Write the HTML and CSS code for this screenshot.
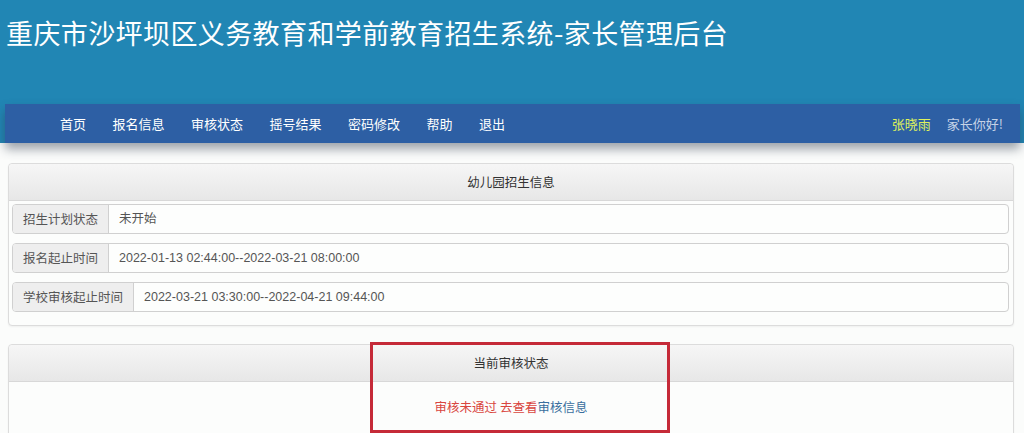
FILE: index.html
```html
<!DOCTYPE html>
<html lang="zh-CN">
<head>
<meta charset="utf-8">
<title>家长管理后台</title>
<link rel="stylesheet" href="styles.css">
</head>
<body>
<header class="top">
  <h1 class="title">重庆市沙坪坝区义务教育和学前教育招生系统-家长管理后台</h1>
  <nav class="nav">
    <ul class="menu">
      <li>首页</li>
      <li>报名信息</li>
      <li>审核状态</li>
      <li>摇号结果</li>
      <li>密码修改</li>
      <li>帮助</li>
      <li>退出</li>
    </ul>
    <div class="user">
      <span class="uname">张晓雨</span>
      <span class="hello">家长你好!</span>
    </div>
  </nav>
</header>
<main class="main">
  <section class="panel">
    <div class="panel-head">幼儿园招生信息</div>
    <div class="panel-body rows">
      <div class="row"><div class="label">招生计划状态</div><div class="value">未开始</div></div>
      <div class="row"><div class="label">报名起止时间</div><div class="value">2022-01-13 02:44:00--2022-03-21 08:00:00</div></div>
      <div class="row"><div class="label">学校审核起止时间</div><div class="value">2022-03-21 03:30:00--2022-04-21 09:44:00</div></div>
    </div>
  </section>
  <section class="panel panel-status">
    <div class="panel-head">当前审核状态</div>
    <div class="panel-body status">
      <span class="red">审核未通过 去查看</span><span class="blue">审核信息</span>
    </div>
    <div class="mark"></div>
  </section>
</main>
</body>
</html>
```
FILE: styles.css
```css
html, body {
  margin: 0;
  padding: 0;
  background: #fbfcfb;
  font-family: "Liberation Sans", "Noto Sans CJK SC", sans-serif;
  overflow: hidden;
}

.top {
  background: #2186b4;
  height: 143px;
  display: flex;
  flex-direction: column;
  justify-content: space-between;
}

.title {
  margin: 0;
  padding: 13px 0 0 6px;
  font-family: "Noto Sans CJK SC", sans-serif;
  font-weight: 400;
  font-size: 27px;
  line-height: 40px;
  color: #ffffff;
  letter-spacing: 0.4px;
}

.nav {
  height: 39px;
  margin: 0 4px 0 5px;
  background: #2d5fa4;
  display: flex;
  align-items: center;
  justify-content: space-between;
  box-shadow: 0 6px 10px rgba(40, 50, 70, 0.45);
  position: relative;
}

.menu {
  list-style: none;
  margin: 0;
  padding: 0 0 0 55px;
  display: flex;
  gap: 26.5px;
}

.menu li,
.user span {
  font-family: "Noto Sans CJK SC", sans-serif;
  font-size: 13px;
  color: #ffffff;
  line-height: 20px;
}

.user {
  display: flex;
  gap: 16px;
  padding-right: 17px;
}

.user .uname {
  color: #dff25c;
}

.user .hello {
  color: #c5d2e6;
}

.main {
  padding: 20px 10px 0 8px;
}

.panel {
  border: 1px solid #dcdcdc;
  border-radius: 4px;
  background: #fcfdfc;
  box-shadow: 0 1px 2px rgba(0, 0, 0, 0.05);
}

.panel + .panel {
  margin-top: 18px;
}

.panel-head {
  height: 36px;
  line-height: 36px;
  text-align: center;
  font-family: "Noto Sans CJK SC", sans-serif;
  font-size: 12.5px;
  color: #333333;
  background: linear-gradient(#f6f6f6, #e7e7e7);
  border-bottom: 1px solid #d8d8d8;
  border-radius: 4px 4px 0 0;
}

.rows {
  padding: 3px 4px 13px 3px;
  display: flex;
  flex-direction: column;
  gap: 9px;
}

.row {
  display: flex;
  height: 28px;
  border: 1px solid #d0d0d0;
  border-radius: 4px;
  background: #fdfefd;
  overflow: hidden;
}

.label {
  background: #eeeeee;
  border-right: 1px solid #d0d0d0;
  padding: 0 10px;
  line-height: 28px;
  font-family: "Noto Sans CJK SC", sans-serif;
  font-size: 12.5px;
  color: #555555;
  white-space: nowrap;
}

.value {
  padding: 0 10px;
  line-height: 28px;
  font-size: 12.5px;
  color: #555555;
  font-family: "Liberation Sans", "Noto Sans CJK SC", sans-serif;
}

.panel-status {
  position: relative;
  height: 100px;
}

.status {
  text-align: center;
  padding-top: 16px;
  font-family: "Noto Sans CJK SC", sans-serif;
  font-size: 12.5px;
  line-height: 18px;
}

.red {
  color: #d9463f;
}

.blue {
  color: #3a6f9e;
}

.mark {
  position: absolute;
  left: 361px;
  top: -3px;
  width: 294px;
  height: 85px;
  border: 3px solid #c52a38;
}
```
